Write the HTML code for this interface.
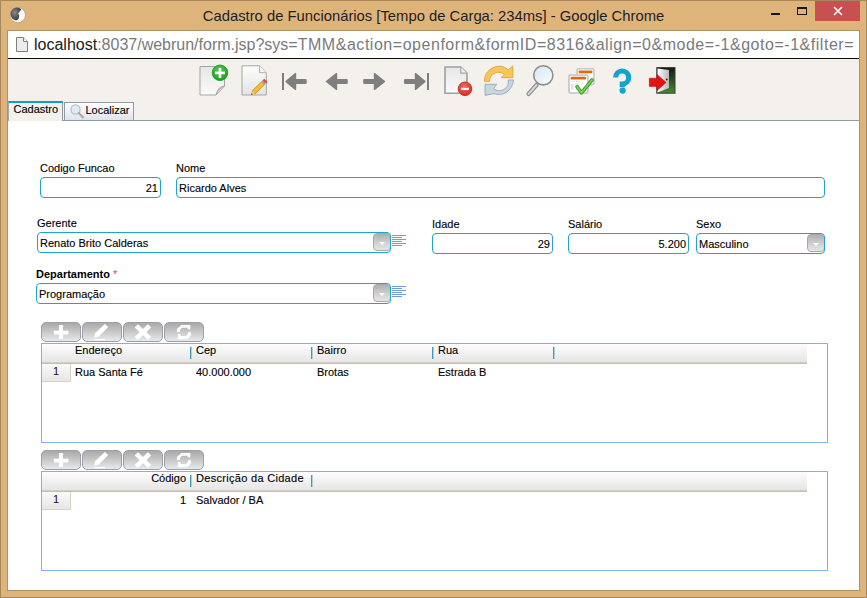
<!DOCTYPE html>
<html><head><meta charset="utf-8">
<style>
*{margin:0;padding:0;box-sizing:border-box}
html,body{width:867px;height:598px;overflow:hidden;background:#DFB47B;font-family:"Liberation Sans",sans-serif}
div,span,svg{position:absolute}
#frame{left:0;top:0;width:867px;height:598px;border:1px solid #A8875C}
#inner{left:7px;top:30px;width:853px;height:561px;border:1px solid #B39163;background:#fff}
#title{left:0;top:7.7px;width:867px;text-align:center;font-size:14.8px;color:#1E1E1E;white-space:nowrap}
#addr{left:8px;top:31px;width:851px;height:27px;background:#fff}
#addrline{left:8px;top:58px;width:851px;height:1px;background:#0A0A0A}
#url{left:34px;top:35px;font-size:16px;line-height:20px;color:#7A7A7A;white-space:nowrap;width:823px;overflow:hidden}
#url b{font-weight:normal;color:#1A1A1A}
#toolbar{left:8px;top:59px;width:851px;height:62px;background:#F4F0EC}
#tabline{left:8px;top:120px;width:851px;height:1px;background:#8D9CA3}
.lbl{font-size:11px;color:#000;white-space:nowrap;line-height:13px;-webkit-text-stroke:0.12px #000}
.inp{height:21px;border:1.6px solid #21A3C6;border-radius:4px;background:#fff;font-size:11px;color:#000;-webkit-text-stroke:0.12px #000;line-height:17px;padding:2px 2px 0 2px;white-space:nowrap;overflow:hidden}
.r{text-align:right}
.dd{top:-0.4px;right:-0.6px;width:18px;height:18.4px;border-radius:4px;border:1px solid #A8A8AC;background:linear-gradient(#AFAFAF,#D6D6D6 65%,#E6E6E6)}
.dd:after{content:"";position:absolute;left:5px;top:8.3px;border-left:3.3px solid transparent;border-right:3.3px solid transparent;border-top:3.5px solid #fff}
.lines{width:15px;height:13px}
.btn{height:20px;width:40px;border:1px solid #9E9EA6;border-radius:5px;background:linear-gradient(#A9A9A9,#E9E9E9)}
.grid{border:1px solid #7DB1EA;background:#fff}
.gh{left:0;top:0;width:765px;height:20px;background:linear-gradient(#FDFDFD,#E4E4E4);border-bottom:1px solid #C5BEAE;box-shadow:0 -1px 0 #D6D0C2 inset}
.gt{font-size:11px;color:#000;white-space:nowrap;line-height:13px;-webkit-text-stroke:0.12px #000}
.sep{width:2px;height:12px;background:linear-gradient(to right,#3F9BBB 50%,#A6D0E0 50%)}
.rn{left:0;width:29px;height:18px;background:linear-gradient(#FAFAFA,#E6E6E6);border-right:1px solid #D6D2C6;border-bottom:1px solid #D6D2C6;font-size:11px;text-align:center;line-height:15px;color:#2A0505}
</style></head><body>
<div id="frame"></div>
<div id="inner"></div>
<div id="title">Cadastro de Funcionários [Tempo de Carga: 234ms] - Google Chrome</div>

<!-- chrome logo -->
<svg style="left:0;top:0" width="30" height="30" viewBox="0 0 30 30">
  <defs><radialGradient id="cl" cx="0.4" cy="0.4" r="0.7"><stop offset="0" stop-color="#8A8A8A"/><stop offset="0.7" stop-color="#4A4A4A"/><stop offset="1" stop-color="#2E2E2E"/></radialGradient></defs>
  <circle cx="17.8" cy="15" r="7.6" fill="#FAFAFA" stroke="#A8885E" stroke-width="0.5"/>
  <path d="M21.2 9.4 A6.3 6.3 0 1 0 17.2 20.2 Q19.6 18.6 19.2 15.6 Q18.8 14 18.2 13.4 Z" fill="url(#cl)"/>
</svg>
<!-- window buttons -->
<div style="left:771px;top:13px;width:9px;height:2px;background:#161616"></div>
<div style="left:797px;top:7px;width:10px;height:8px;border:1px solid #161616;border-top-width:2px"></div>
<div style="left:815px;top:1px;width:45px;height:20px;background:#C75050"></div>
<svg style="left:832px;top:5px" width="12" height="12" viewBox="0 0 12 12"><path d="M2 2 L10 10 M10 2 L2 10" stroke="#fff" stroke-width="1.6"/></svg>

<div id="addr"></div>
<div id="addrline"></div>
<svg style="left:15px;top:36px" width="14" height="18" viewBox="0 0 14 18">
  <path d="M1.5 1.5 H8.5 L12.5 5.5 V15.5 H1.5 Z" fill="#EDEDED" stroke="#7E7E7E" stroke-width="1"/>
  <path d="M8.5 1.5 V5.5 H12.5" fill="#fff" stroke="#7E7E7E" stroke-width="1"/>
</svg>
<div id="url"><b>localhost</b>:8037/webrun/form.jsp?sys=<span style="position:static;letter-spacing:0.53px">TMM&amp;action=openform&amp;formID=8316&amp;align=0&amp;mode=-1&amp;goto=-1&amp;filter=</span></div>

<div id="toolbar"></div>
<div id="tabline"></div>
<svg style="left:0;top:0" width="867" height="121" viewBox="0 0 867 121">
<defs>
 <linearGradient id="pg" x1="0" y1="0" x2="0" y2="1"><stop offset="0" stop-color="#E6E6E6"/><stop offset="1" stop-color="#FAFAFA"/></linearGradient>
 <linearGradient id="pg2" x1="0" y1="0" x2="0" y2="1"><stop offset="0" stop-color="#FDFDFD"/><stop offset="1" stop-color="#E4E4E4"/></linearGradient>
 <radialGradient id="gr" cx="0.45" cy="0.35" r="0.7"><stop offset="0" stop-color="#5CC85C"/><stop offset="1" stop-color="#12A012"/></radialGradient>
 <radialGradient id="rd" cx="0.45" cy="0.35" r="0.7"><stop offset="0" stop-color="#F46A5A"/><stop offset="1" stop-color="#D42A20"/></radialGradient>
 <linearGradient id="lens" x1="0" y1="0" x2="1" y2="1"><stop offset="0" stop-color="#D2E6F2"/><stop offset="1" stop-color="#FBFDFE"/></linearGradient>
 <linearGradient id="door" x1="0" y1="0" x2="0" y2="1"><stop offset="0" stop-color="#0E1A0E"/><stop offset="0.5" stop-color="#2E4E28"/><stop offset="1" stop-color="#4A8A34"/></linearGradient>
 <linearGradient id="dw" x1="0" y1="0" x2="1" y2="0"><stop offset="0" stop-color="#FFFFFF"/><stop offset="1" stop-color="#B8B8B8"/></linearGradient>
</defs>
<!-- new -->
<path d="M200 66.5 H224.5 V86 L216 95 H200 Z" fill="url(#pg)" stroke="#A5A5A5" stroke-width="1"/>
<path d="M224.5 86 Q218 86 216 95 Q219 88 224.5 86 Z" fill="#D0D0D0" stroke="#A5A5A5" stroke-width="0.8"/>
<circle cx="220" cy="72.8" r="7.8" fill="url(#gr)" stroke="#139A13" stroke-width="0.8"/>
<rect x="215" y="71.6" width="10" height="2.6" fill="#fff"/>
<rect x="218.7" y="67.9" width="2.6" height="10" fill="#fff"/>
<!-- edit -->
<path d="M242 65.8 H259.4 L266.3 72.7 V95 H242 Z" fill="url(#pg2)" stroke="#A5A5A5" stroke-width="1"/>
<path d="M259.4 65.8 V72.7 H266.3" fill="#F4F4F4" stroke="#B0B0B0" stroke-width="1"/>
<path d="M253.2 92.9 L262.8 83.4" stroke="#D8900E" stroke-width="4.8"/>
<path d="M253.2 92.9 L262.8 83.4" stroke="#F6C12C" stroke-width="3"/>
<path d="M262.7 83.5 L264.5 81.7" stroke="#A0A0A0" stroke-width="4.6"/>
<path d="M264.4 81.8 L265.9 80.3" stroke="#E8403A" stroke-width="4.6"/>
<path d="M251.3 94.8 L251.7 91.3 L254.7 94.5 Z" fill="#E9C79A"/>
<path d="M251.3 94.8 L251.5 93.2 L252.9 94.6 Z" fill="#222"/>
<!-- first -->
<g fill="#7F7F7F" stroke="#7F7F7F" stroke-linejoin="round" stroke-linecap="round">
<rect x="282" y="73" width="2" height="17" stroke="none"/>
<path d="M286 81.5 L295.5 73.6 V89.4 Z" stroke-width="1.4"/>
<rect x="294" y="78.9" width="12.7" height="5.1" rx="1.2" stroke="none"/>
<!-- prev -->
<path d="M326.5 81.5 L336.5 73.6 V89.4 Z" stroke-width="1.4"/>
<rect x="335" y="78.9" width="12.8" height="5.1" rx="1.2" stroke="none"/>
<!-- next -->
<path d="M384.5 81.5 L374.5 73.6 V89.4 Z" stroke-width="1.4"/>
<rect x="363.2" y="78.9" width="12.8" height="5.1" rx="1.2" stroke="none"/>
<!-- last -->
<path d="M425 81.5 L415.5 73.6 V89.4 Z" stroke-width="1.4"/>
<rect x="404" y="78.9" width="12.8" height="5.1" rx="1.2" stroke="none"/>
<rect x="427" y="73" width="2" height="17" stroke="none"/>
</g>
<!-- delete -->
<path d="M445 67 H460.8 L467 73.2 V93.2 H445 Z" fill="url(#pg)" stroke="#A0A0A0" stroke-width="1.6"/>
<path d="M460.8 67 V73.2 H467" fill="#F0F0F0" stroke="#A8A8A8" stroke-width="1.2"/>
<circle cx="465" cy="88.8" r="6.8" fill="url(#rd)" stroke="#C42A22" stroke-width="0.9"/>
<rect x="461" y="87.8" width="8" height="2.2" fill="#fff"/>
<!-- refresh -->
<path d="M484.5 81.3 A14.5 14.8 0 0 1 508.3 69.8 L512.8 65.9 V77.7 H501 L504.5 74.5 A9 9 0 0 0 489.6 81.3 Z" fill="#F6C65A" stroke="#E0A43A" stroke-width="0.9"/>
<path d="M513.4 80 A14.5 15.5 0 0 1 494 93.6 L485 95.4 V84.3 H496.6 L493.5 88.5 A9 9 0 0 0 508.2 80 Z" fill="#C8D6E0" stroke="#93A8BA" stroke-width="0.9"/>
<!-- search -->
<path d="M528.5 94 L536.5 85" stroke="#8C8C8C" stroke-width="4.2" stroke-linecap="round"/>
<path d="M528.5 94 L536.5 85" stroke="#D4D4D4" stroke-width="2" stroke-linecap="round"/>
<circle cx="543.3" cy="75.3" r="9.6" fill="url(#lens)" stroke="#8E8E8E" stroke-width="1.6"/>
<!-- checklist -->
<rect x="577" y="68.8" width="17" height="15.8" rx="1.5" fill="#fff" stroke="#C8C8C8" stroke-width="1.6"/>
<rect x="578.5" y="70.4" width="14" height="2.8" rx="1.2" fill="#E06A10"/>
<rect x="569" y="75" width="19" height="18" rx="1.5" fill="#fff" stroke="#C4C4C4" stroke-width="1.6"/>
<rect x="570.6" y="76.8" width="15.4" height="2.8" rx="1.2" fill="#E06A10"/>
<g fill="#D8D8D8"><rect x="571" y="81" width="1.2" height="1"/><rect x="573.5" y="81" width="1.2" height="1"/><rect x="576" y="81" width="1.2" height="1"/><rect x="578.5" y="81" width="1.2" height="1"/></g><rect x="571" y="83.5" width="2.5" height="6" fill="#E4E4E4"/><rect x="575" y="83.5" width="8" height="1" fill="#E8E8E8"/>
<path d="M577 86.6 L581.5 92.8 L592 80" fill="none" stroke="#3E9A2A" stroke-width="3.6" stroke-linecap="round" stroke-linejoin="round"/>
<path d="M577 86.6 L581.5 92.8 L592 80" fill="none" stroke="#7CD05E" stroke-width="1.7" stroke-linecap="round" stroke-linejoin="round"/>
<!-- help -->
<path d="M615.7 77.5 A6.5 6.5 0 1 1 622.3 84 V87.2" fill="none" stroke="#13A4CE" stroke-width="5.2"/>
<circle cx="622.6" cy="90.6" r="3.1" fill="#13A4CE"/>
<!-- exit -->
<rect x="656.8" y="67.6" width="18.2" height="25.6" fill="url(#door)" stroke="#3A3A3A" stroke-width="1"/>
<path d="M657.5 68.5 L669 70 V88 L657.5 92.5 Z" fill="url(#dw)"/>
<circle cx="666.8" cy="79.5" r="0.9" fill="#222"/>
<path d="M649.3 78.2 H657 V74.4 L666.1 82.4 L657 90.6 V86.4 H649.3 Z" fill="#E81010" stroke="#C00000" stroke-width="0.5"/>
</svg>

<!-- tabs -->
<div style="left:8px;top:101px;width:55px;height:20px;background:#F4F0EC;border-top:2px solid #0AA0C9;border-left:1px solid #9AAAB3;border-right:1px solid #8D9CA3"></div>
<div class="lbl" style="left:13.5px;top:103px;font-size:11px">Cadastro</div>
<div style="left:64px;top:102px;width:70px;height:18px;border:1px solid #8D9CA3;border-bottom:none;background:linear-gradient(#FFFFFF,#E2E2EE)"></div>
<svg style="left:69px;top:103px" width="16" height="17" viewBox="0 0 16 17">
  <circle cx="6.5" cy="6.5" r="4.6" fill="#DDEBF5" stroke="#B8BEC4" stroke-width="1.3"/>
  <path d="M9.8 10 L14 14.5" stroke="#A8A8A8" stroke-width="2" stroke-linecap="round"/>
</svg>
<div class="lbl" style="left:85.5px;top:104px">Localizar</div>

<!-- form row 1 -->
<div class="lbl" style="left:40px;top:162px">Codigo Funcao</div>
<div class="inp r" style="left:40px;top:177px;width:121px">21</div>
<div class="lbl" style="left:176px;top:162px">Nome</div>
<div class="inp" style="left:176px;top:177px;width:649px">Ricardo Alves</div>

<!-- row 2 -->
<div class="lbl" style="left:37px;top:217px">Gerente</div>
<div class="inp" style="left:37px;top:232px;width:354px">Renato Brito Calderas<div class="dd"></div></div>
<div class="lines" style="left:391px;top:234px"><svg width="15" height="13" viewBox="0 0 15 13"><g stroke="#6F9BDB" stroke-width="1"><path d="M1 1.5H15M1 3.5H11M1 5.5H15M1 7.5H11M1 9.5H15M1 11.5H11"/></g></svg></div>
<div class="lbl" style="left:432px;top:218px">Idade</div>
<div class="inp r" style="left:432px;top:233px;width:121px">29</div>
<div class="lbl" style="left:568px;top:218px">Salário</div>
<div class="inp r" style="left:568px;top:233px;width:121px">5.200</div>
<div class="lbl" style="left:696px;top:218px">Sexo</div>
<div class="inp" style="left:696px;top:233px;width:129px">Masculino<div class="dd"></div></div>

<!-- row 3 -->
<div class="lbl" style="left:36px;top:268px;font-weight:bold;-webkit-text-stroke:0">Departamento <span style="position:static;color:#F0463C;font-weight:normal">*</span></div>
<div class="inp" style="left:36px;top:283px;width:355px">Programação<div class="dd"></div></div>
<div class="lines" style="left:391px;top:285px"><svg width="15" height="13" viewBox="0 0 15 13"><g stroke="#6F9BDB" stroke-width="1"><path d="M1 1.5H15M1 3.5H11M1 5.5H15M1 7.5H11M1 9.5H15M1 11.5H11"/></g></svg></div>

<!-- grid 1 -->
<div class="btn" style="left:41px;top:322px"></div>
<div class="btn" style="left:82px;top:322px"></div>
<div class="btn" style="left:123px;top:322px"></div>
<div class="btn" style="left:164px;top:322px"></div>
<svg style="left:0;top:322px" width="210" height="30" viewBox="0 0 210 30">
<g fill="#fff">
<rect x="53.8" y="8.7" width="14.6" height="3.8"/>
<rect x="59" y="3" width="4" height="14"/>
<path d="M94 15.8 L95.4 10.8 L104.9 1.9 L108.1 5.1 L99 14.4 Z"/>
<rect x="94" y="17" width="11" height="1.2"/>
<path d="M136.3 3.8 L149.6 16.4" stroke="#fff" stroke-width="4.6"/>
<path d="M149.6 3.8 L136.3 16.4" stroke="#fff" stroke-width="4.6"/>
<path d="M181.5 2.9 H190.3 V7.3 H187.5 V5.8 H182 L179.8 8 V10 H177 V7 Z"/>
<path d="M177.8 12 H180.5 V14 H186 L188 12 V10.2 H190.8 V13.5 L187.5 17 H177.8 Z"/>
</g></svg>
<div class="grid" style="left:41px;top:343px;width:787px;height:100px">
  <div class="gh"></div>
</div>
<div class="gt" style="left:75px;top:344px">Endereço</div>
<div class="sep" style="left:190px;top:347px"></div>
<div class="gt" style="left:196px;top:344px">Cep</div>
<div class="sep" style="left:311px;top:347px"></div>
<div class="gt" style="left:317px;top:344px">Bairro</div>
<div class="sep" style="left:432px;top:347px"></div>
<div class="gt" style="left:438px;top:344px">Rua</div>
<div class="sep" style="left:553px;top:347px"></div>
<div class="rn" style="left:42px;top:364px">1</div>
<div class="gt" style="left:75px;top:366px">Rua Santa Fé</div>
<div class="gt" style="left:196px;top:366px">40.000.000</div>
<div class="gt" style="left:317px;top:366px">Brotas</div>
<div class="gt" style="left:438px;top:366px">Estrada B</div>

<!-- grid 2 -->
<div class="btn" style="left:41px;top:450px"></div>
<div class="btn" style="left:82px;top:450px"></div>
<div class="btn" style="left:123px;top:450px"></div>
<div class="btn" style="left:164px;top:450px"></div>
<svg style="left:0;top:450px" width="210" height="30" viewBox="0 0 210 30">
<g fill="#fff">
<rect x="53.8" y="8.7" width="14.6" height="3.8"/>
<rect x="59" y="3" width="4" height="14"/>
<path d="M94 15.8 L95.4 10.8 L104.9 1.9 L108.1 5.1 L99 14.4 Z"/>
<rect x="94" y="17" width="11" height="1.2"/>
<path d="M136.3 3.8 L149.6 16.4" stroke="#fff" stroke-width="4.6"/>
<path d="M149.6 3.8 L136.3 16.4" stroke="#fff" stroke-width="4.6"/>
<path d="M181.5 2.9 H190.3 V7.3 H187.5 V5.8 H182 L179.8 8 V10 H177 V7 Z"/>
<path d="M177.8 12 H180.5 V14 H186 L188 12 V10.2 H190.8 V13.5 L187.5 17 H177.8 Z"/>
</g></svg>
<div class="grid" style="left:41px;top:471px;width:787px;height:100px">
  <div class="gh"></div>
</div>
<div class="gt" style="left:100px;top:472px;width:86px;text-align:right">Código</div>
<div class="sep" style="left:190px;top:474.5px"></div>
<div class="gt" style="left:196px;top:472px;letter-spacing:0.3px">Descrição da Cidade</div>
<div class="sep" style="left:311px;top:474.5px"></div>
<div class="rn" style="left:42px;top:492px">1</div>
<div class="gt" style="left:100px;top:494px;width:86px;text-align:right">1</div>
<div class="gt" style="left:196px;top:494px">Salvador / BA</div>

</body></html>
